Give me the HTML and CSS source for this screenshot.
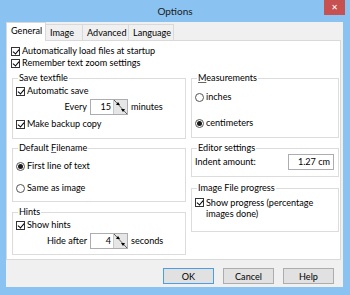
FILE: index.html
```html
<!DOCTYPE html>
<html lang="en">
<head>
  <meta charset="UTF-8" />
  <title>Options</title>
  <link rel="stylesheet" href="styles.css">
</head>
<body>
  <div class="window">
    <div class="titlebar">
      <span class="title">Options</span>
      <div class="close">&#x2715;</div>
    </div>

    <div class="client">
      <div class="tabs">
        <div class="tab tab-general active">General</div>
        <div class="tab tab-image">Image</div>
        <div class="tab tab-advanced">Advanced</div>
        <div class="tab tab-language">Language</div>
      </div>

      <div class="page">
        <div class="row check-row"><span class="box checked"></span>Automatically load files at startup</div>
        <div class="row check-row"><span class="box checked"></span>Remember text zoom settings</div>

        <div class="columns">
          <div class="col col-left">
            <div class="group group-save">
              <div class="group-title">Save textfile</div>
              <div class="row check-row autosave"><span class="box checked"></span>Automatic save</div>
              <div class="row spin-row every">
                <span class="spin-label">Every</span>
                <div class="spin"><span class="spin-val">15</span><span class="spin-arrows"><i class="up"></i><i class="down"></i></span></div>
                <span class="spin-unit">minutes</span>
              </div>
              <div class="row check-row backup"><span class="box checked"></span>Make backup copy</div>
            </div>

            <div class="group group-filename">
              <div class="group-title">Default <u>F</u>ilename</div>
              <div class="row radio-row first-line"><span class="radio on"></span>First line of text</div>
              <div class="row radio-row same-image"><span class="radio"></span>Same as image</div>
            </div>

            <div class="group group-hints">
              <div class="group-title">Hints</div>
              <div class="row check-row showhints"><span class="box checked"></span>Show hints</div>
              <div class="row spin-row hide-after">
                <span class="spin-label">Hide after</span>
                <div class="spin"><span class="spin-val">4</span><span class="spin-arrows"><i class="up"></i><i class="down"></i></span></div>
                <span class="spin-unit">seconds</span>
              </div>
            </div>
          </div>

          <div class="col col-right">
            <div class="group group-measure">
              <div class="group-title"><u>M</u>easurements</div>
              <div class="row radio-row inches"><span class="radio"></span>inches</div>
              <div class="row radio-row cm"><span class="radio on"></span>centimeters</div>
            </div>

            <div class="group group-editor">
              <div class="group-title">Editor settings</div>
              <div class="row indent-row">
                <span>Indent amount:</span>
                <div class="indent-box">1.27 cm</div>
              </div>
            </div>

            <div class="group group-progress">
              <div class="group-title">Image File progress</div>
              <div class="row check-row progress"><span class="box checked"></span><span class="wrap">Show progress (percentage<br>images done)</span></div>
            </div>
          </div>
        </div>
      </div>

      <div class="buttons">
        <button class="btn default">OK</button>
        <button class="btn">Cancel</button>
        <button class="btn">Help</button>
      </div>
    </div>
  </div>
</body>
</html>
```

FILE: styles.css
```css
* {
  margin: 0;
  padding: 0;
  box-sizing: border-box;
}
body {
  font-family: Lato, 'Liberation Sans', sans-serif;
  font-size: 9.1px;
  line-height: 12px;
  color: #000;
  background: #8ac3f1;
}
.window {
  width: 350px;
  height: 295px;
  background: #8ac3f1;
  display: flex;
  flex-direction: column;
}
.titlebar {
  height: 22px;
  position: relative;
  text-align: center;
  line-height: 22px;
}
.title {
  font-size: 10px;
  color: #1a1a1a;
}
.close {
  position: absolute;
  top: 0;
  right: 5px;
  width: 21px;
  height: 15px;
  background: #c75050;
  color: #fff;
  font-family: 'DejaVu Sans', sans-serif;
  font-size: 8px;
  font-weight: bold;
  line-height: 15px;
  text-align: center;
}
.client {
  flex: 1;
  margin: 0 7px 8px 6px;
  background: #f0f0f0;
  display: flex;
  flex-direction: column;
}
.tabs {
  height: 18px;
  display: flex;
  align-items: flex-end;
}
.tab {
  height: 16px;
  line-height: 15px;
  padding-left: 4px;
  border: 1px solid #d9d9d9;
  border-bottom: none;
  border-left: none;
  background: #f0f0f0;
  color: #000;
  white-space: nowrap;
}
.tab.active {
  height: 19px;
  margin-bottom: -1px;
  background: #fff;
  border-left: 1px solid #d9d9d9;
  line-height: 16px;
  position: relative;
}
.tab-general { width: 40px; }
.tab-image { width: 37px; }
.tab-advanced { width: 46px; }
.tab-language { width: 45px; }
.page {
  height: 220px;
  margin-right: 2px;
  background: #fff;
  border: 1px solid #d9d9d9;
  padding: 4px 1px 0 4px;
}
.row {
  display: flex;
  align-items: center;
  height: 12px;
  white-space: nowrap;
}
.box {
  width: 9px;
  height: 9px;
  border: 1px solid #333;
  background: #fff;
  margin-right: 2px;
  position: relative;
  flex: none;
}
.box.checked::after {
  content: "";
  position: absolute;
  left: 2px;
  top: 0;
  width: 3px;
  height: 5px;
  border: solid #000;
  border-width: 0 1.5px 1.5px 0;
  transform: rotate(40deg);
}
.radio {
  width: 9px;
  height: 9px;
  border: 1px solid #555;
  border-radius: 50%;
  background: #fff;
  margin-right: 2px;
  display: flex;
  align-items: center;
  justify-content: center;
  flex: none;
}
.radio.on::after {
  content: "";
  width: 5px;
  height: 5px;
  border-radius: 50%;
  background: #1a1a1a;
}
.columns {
  display: flex;
  gap: 5px;
  margin: 9px 0 0 1px;
}
.col-left { width: 174px; }
.col-right { width: 148px; }
.group {
  border: 1px solid #dcdcdc;
  padding: 0 3px;
}
.group-title {
  margin: -7px 0 0 2px;
  padding: 0 1px;
  width: fit-content;
  line-height: 12px;
  background: #fff;
  color: #000;
}
.group-title u {
  text-decoration-color: #666;
}
.group-save { height: 61px; }
.group-filename { height: 54px; margin-top: 9px; }
.group-hints { height: 43px; margin-top: 10px; }
.group-measure { height: 60px; }
.group-editor { height: 29px; margin-top: 10px; }
.group-progress { height: 44px; margin-top: 11px; }

.autosave { margin-top: 1px; }
.every { margin-top: 2px; }
.backup { margin-top: 3px; }
.first-line { margin-top: 6px; }
.same-image { margin-top: 10px; }
.showhints { margin-top: 1px; }
.hide-after { margin-top: 2px; }
.inches { margin-top: 7px; }
.cm { margin-top: 14px; }
.progress {
  margin-top: 3px;
  height: auto;
  align-items: flex-start;
  line-height: 11px;
}
.progress .box { margin-top: 1px; }

.spin-row { height: 16px; }
.spin-label {
  width: 71px;
  text-align: right;
  margin-right: 3px;
}
.spin {
  width: 38px;
  height: 16px;
  border: 1px solid #abadb3;
  display: flex;
  background: #fff;
}
.spin-val {
  flex: 1;
  text-align: right;
  padding-right: 2px;
  line-height: 14px;
}
.spin-arrows {
  width: 14px;
  background:
    linear-gradient(to top right, transparent calc(50% - 0.7px), #555 50%, transparent calc(50% + 0.7px)),
    #e6e6e6;
  border-left: 1px solid #c8c8c8;
  position: relative;
}
.spin-arrows .up,
.spin-arrows .down {
  position: absolute;
  width: 0;
  height: 0;
  border-left: 2.5px solid transparent;
  border-right: 2.5px solid transparent;
}
.spin-arrows .up {
  top: 2px;
  left: 2px;
  border-bottom: 3px solid #000;
}
.spin-arrows .down {
  bottom: 2px;
  right: 2px;
  border-top: 3px solid #000;
}
.spin-unit { margin-left: 3px; }

.indent-row {
  height: 16px;
  justify-content: space-between;
  padding-right: 1px;
}
.indent-box {
  width: 46px;
  height: 16px;
  border: 1px solid #abadb3;
  text-align: right;
  padding-right: 3px;
  line-height: 14px;
}
.buttons {
  flex: 1;
  display: flex;
  justify-content: flex-end;
  gap: 9px;
  padding: 8px 9px 0 0;
}
.btn {
  width: 51px;
  height: 16px;
  background: #e1e1e1;
  border: 1px solid #adadad;
  font-family: inherit;
  font-size: 9.1px;
  color: #000;
}
.btn.default {
  border-color: #4a9de8;
}
```
